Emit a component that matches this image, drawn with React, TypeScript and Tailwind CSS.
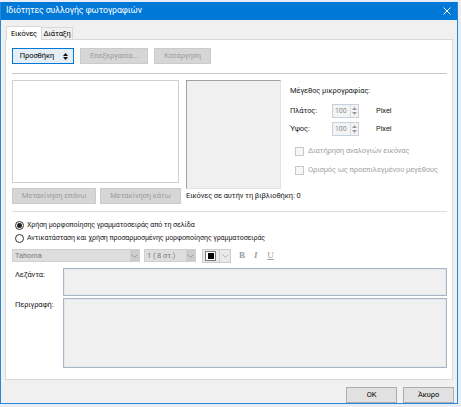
import type { ReactNode } from 'react';

function Btn({ children, w, disabled, focused }: { children: ReactNode; w: string; disabled?: boolean; focused?: boolean }) {
  return (
    <div
      className={`${w} h-[16px] flex items-center justify-center border text-[7.5px] leading-none ${
        disabled
          ? 'bg-[#d6d6d6] border-[#cbcbcb] text-[#9c9c9c]'
          : focused
          ? 'bg-[#e5eef7] border-[#0078d7] text-black'
          : 'bg-[#e1e1e1] border-[#adadad] text-black'
      }`}
    >
      {children}
    </div>
  );
}

function Spinner() {
  return (
    <div className="flex h-[14px] w-[27px] border border-[#c5d1dd] bg-[#f4f4f4]">
      <div className="flex-1 flex items-center pl-[2px] text-[7px] text-[#8d8d8d]">100</div>
      <div className="w-[8px] flex flex-col items-center justify-center gap-[2px] border-l border-[#dcdcdc]">
        <svg width="5" height="3" viewBox="0 0 5 3"><path d="M0 3 L2.5 0 L5 3Z" fill="#9a9a9a" /></svg>
        <svg width="5" height="3" viewBox="0 0 5 3"><path d="M0 0 L2.5 3 L5 0Z" fill="#9a9a9a" /></svg>
      </div>
    </div>
  );
}

function Check({ label }: { label: string }) {
  return (
    <div className="flex items-center gap-[4px] h-[12px]">
      <div className="w-[9px] h-[9px] border border-[#c8c8c8] bg-[#f7f7f7]" />
      <span className="text-[7.5px] text-[#a3a3a3] whitespace-nowrap">{label}</span>
    </div>
  );
}

function Radio({ label, checked }: { label: string; checked?: boolean }) {
  return (
    <div className="flex items-center gap-[3px] h-[12px]">
      <div className="w-[9px] h-[9px] rounded-full border border-[#333] bg-white flex items-center justify-center">
        {checked && <div className="w-[5px] h-[5px] rounded-full bg-[#222]" />}
      </div>
      <span className="text-[7.1px] text-[#1a1a1a] whitespace-nowrap">{label}</span>
    </div>
  );
}

function Chevron({ color = '#9b9b9b' }: { color?: string }) {
  return (
    <svg width="7" height="4" viewBox="0 0 7 4">
      <path d="M0.5 0.5 L3.5 3.5 L6.5 0.5" fill="none" stroke={color} strokeWidth="1" />
    </svg>
  );
}

function Combo({ text, w }: { text: string; w: string }) {
  return (
    <div className={`${w} h-[13px] flex border border-[#d0d0d0] bg-[#dedede]`}>
      <div className="flex-1 flex items-center pl-[2px] text-[7.5px] text-[#7d7d7d]">{text}</div>
      <div className="w-[9px] flex items-center justify-center bg-[#cdcdcd]">
        <Chevron />
      </div>
    </div>
  );
}

export default function App() {
  return (
    <div
      className="w-[461px] h-[407px] bg-[#e7edf4] pt-[2px] overflow-hidden tracking-[-0.1px]"
      style={{ fontFamily: 'Roboto, "Noto Sans", sans-serif' }}
    >
      <div className="w-[458px] h-[402px] flex flex-col border-x border-b border-[#2a87d6] bg-[#f0f0f0]">
        {/* title bar */}
        <div className="h-[18px] flex items-center bg-[#0078d7] pl-[5px] pr-[6px] text-white text-[8.75px]">
          <span>Ιδιότητες συλλογής φωτογραφιών</span>
          <svg className="ml-auto" width="8" height="8" viewBox="0 0 8 8">
            <path d="M0.5 0.5 L7.5 7.5 M7.5 0.5 L0.5 7.5" stroke="white" strokeWidth="1" />
          </svg>
        </div>

        <div className="flex-1 flex flex-col px-[4px]">
          {/* tabs */}
          <div className="flex items-end h-[17px] mt-[2px]">
            <div className="h-[14px] w-[36px] ml-px flex items-center justify-center bg-white border border-b-0 border-[#d9d9d9] text-[7.5px] text-black relative top-px">
              Εικόνες
            </div>
            <div className="h-[12px] w-[31px] flex items-center justify-center border border-l-0 border-b-0 border-[#d9d9d9] text-[7.5px] text-black">
              Διάταξη
            </div>
          </div>

          {/* panel */}
          <div className="h-[341px] bg-white border border-[#d9d9d9] pl-[6px] pr-[5px] flex flex-col">
            <div className="flex gap-[6px] mt-[8px]">
              <Btn w="w-[62px]" focused>
                <span className="ml-[2px]">Προσθήκη</span>
                <svg className="ml-[9px]" width="5" height="7" viewBox="0 0 5 7">
                  <path d="M0 4 L2.5 7 L5 4Z M0 3 L2.5 0 L5 3Z" fill="#111" />
                </svg>
              </Btn>
              <Btn w="w-[68px]" disabled>Επεξεργασία...</Btn>
              <Btn w="w-[57px]" disabled>Κατάργηση</Btn>
            </div>
            <div className="h-px bg-[#c9c9c9] mt-[9px]" />

            {/* main row */}
            <div className="flex mt-[6px]">
              <div className="flex flex-col w-[169px]">
                <div className="h-[103px] w-[167px] border border-[#cfcfcf] bg-white" />
                <div className="flex gap-[4px] mt-[5px]">
                  <Btn w="w-[84px]" disabled>Μετακίνηση επάνω</Btn>
                  <Btn w="w-[81px]" disabled>Μετακίνηση κάτω</Btn>
                </div>
              </div>
              <div className="flex flex-col ml-[5px]">
                <div className="flex">
                  <div className="w-[95px] h-[109px] bg-[#f0f0f0] border border-[#a0a0a0] border-r-[#e3e3e3] border-b-[#e3e3e3]" />
                  <div className="flex flex-col ml-[9px] pt-[5px]">
                    <span className="text-[7.5px] text-[#1a1a1a] h-[12px] leading-[12px]">Μέγεθος μικρογραφίας:</span>
                    <div className="flex items-center mt-[7px] h-[14px]">
                      <span className="w-[42px] text-[7.5px] text-[#1a1a1a]">Πλάτος:</span>
                      <Spinner />
                      <span className="ml-[17px] text-[7.5px] text-[#1a1a1a]">Pixel</span>
                    </div>
                    <div className="flex items-center mt-[4px] h-[14px]">
                      <span className="w-[42px] text-[7.5px] text-[#1a1a1a]">Ύψος:</span>
                      <Spinner />
                      <span className="ml-[17px] text-[7.5px] text-[#1a1a1a]">Pixel</span>
                    </div>
                    <div className="flex flex-col gap-[7px] mt-[9px] ml-[5px]">
                      <Check label="Διατήρηση αναλογιών εικόνας" />
                      <Check label="Ορισμός ως προεπιλεγμένου μεγέθους" />
                    </div>
                  </div>
                </div>
                <span className="text-[7.5px] text-[#1a1a1a] mt-[1px] h-[12px] leading-[12px]">
                  Εικόνες σε αυτήν τη βιβλιοθήκη: 0
                </span>
              </div>
            </div>

            <div className="h-px bg-[#dcdcdc] mt-[7px]" />

            <div className="flex flex-col gap-[1px] mt-[7px] ml-[3px]">
              <Radio label="Χρήση μορφοποίησης γραμματοσειράς από τη σελίδα" checked />
              <Radio label="Αντικατάσταση και χρήση προσαρμοσμένης μορφοποίησης γραμματοσειράς" />
            </div>

            {/* font toolbar */}
            <div className="flex items-center mt-[5px] h-[13px]">
              <Combo text="Tahoma" w="w-[128px]" />
              <div className="w-[4px]" />
              <Combo text="1 ( 8 στ.)" w="w-[52px]" />
              <div className="ml-[6px] h-[14px] w-[29px] flex items-center border border-[#cccccc] bg-[#e9e9e9]">
                <div className="ml-[2px] w-[11px] h-[10px] border border-[#777] bg-white flex items-center justify-center">
                  <div className="w-[6px] h-[6px] bg-black" />
                </div>
                <div className="h-full w-px bg-[#d0d0d0] ml-[3px]" />
                <div className="ml-[2px]"><Chevron color="#b5b5b5" /></div>
              </div>
              <span className="ml-[8px] text-[9px] font-bold text-[#9c9c9c]" style={{ fontFamily: '"Liberation Serif", serif' }}>B</span>
              <span className="ml-[9px] text-[9px] italic font-bold text-[#9c9c9c]" style={{ fontFamily: '"Liberation Serif", serif' }}>I</span>
              <span className="ml-[10px] text-[9px] underline text-[#9c9c9c]" style={{ fontFamily: '"Liberation Serif", serif' }}>U</span>
            </div>

            <div className="flex mt-[6px] ml-[3px]">
              <span className="w-[48px] text-[7.5px] text-[#1a1a1a] mt-[1px]">Λεζάντα:</span>
              <div className="w-[385px] h-[28px] bg-[#f0f0f0] border border-[#aab4c3] shadow-[inset_0_0_0_1px_#e2e8ef]" />
            </div>
            <div className="flex mt-[2px] ml-[3px]">
              <span className="w-[48px] text-[7.5px] text-[#1a1a1a] mt-[1px]">Περιγραφή:</span>
              <div className="w-[385px] h-[70px] bg-[#f0f0f0] border border-[#aab4c3] shadow-[inset_0_0_0_1px_#e2e8ef]" />
            </div>
          </div>

          {/* footer */}
          <div className="flex justify-end gap-[6px] mt-[7px] mr-[-1px]">
            <div className="w-[51px] h-[16px] flex items-center justify-center bg-[#e1e1e1] border border-[#adadad] text-[7.5px] text-black">OK</div>
            <div className="w-[51px] h-[16px] flex items-center justify-center bg-[#e1e1e1] border border-[#adadad] text-[7.5px] text-black">Άκυρο</div>
          </div>
        </div>
      </div>
    </div>
  );
}
